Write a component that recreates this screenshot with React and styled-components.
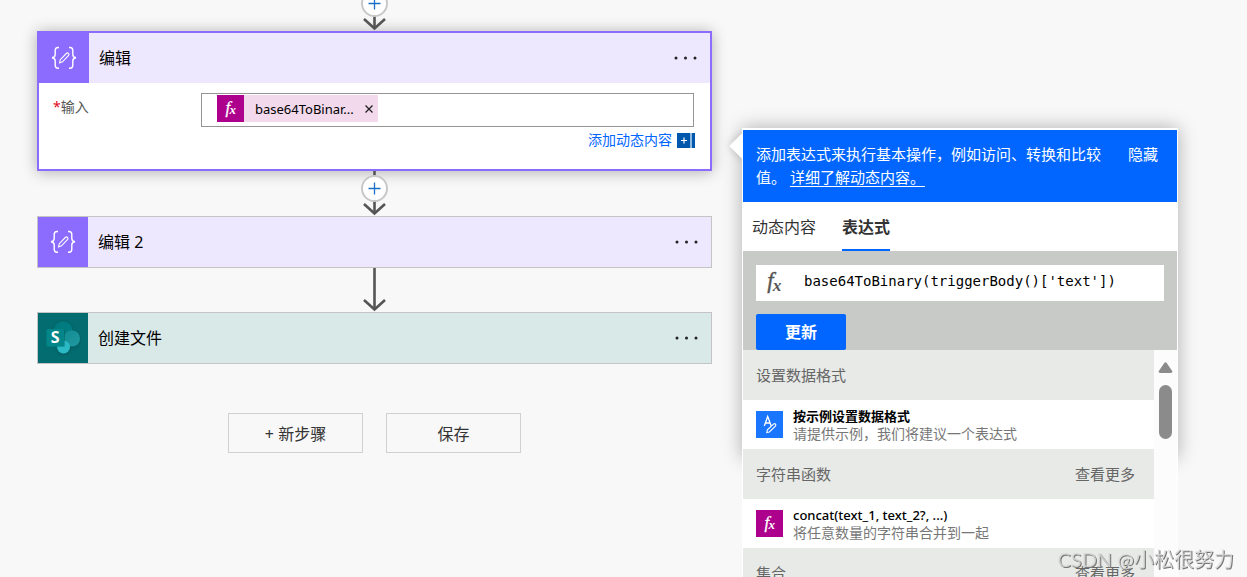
import React, { useState } from "react";
import styled, { createGlobalStyle } from "styled-components";

const GlobalStyle = createGlobalStyle`
  *, *::before, *::after {
    box-sizing: border-box;
  }

  body {
    margin: 0;
    overflow: hidden;
    background: #f8f8f8;
    color: #000;
    font-family: "Noto Sans", "Noto Sans CJK SC", sans-serif;
    font-size: 14px;
  }

  button, input {
    font-family: inherit;
  }
`;

const Page = styled.div`
  display: flex;
  align-items: flex-start;
  gap: 30px;
  height: 100vh;
  padding: 0 69px 0 37px;
  overflow: hidden;
`;

/* ---------- Flow designer ---------- */

const Flow = styled.main`
  flex: 1;
  min-width: 0;
  display: flex;
  flex-direction: column;
`;

const ConnectorBox = styled.div`
  position: relative;
  z-index: 1;
  display: flex;
  justify-content: center;

  > svg {
    display: block;
  }
`;

const AddButton = styled.button`
  position: absolute;
  left: 0;
  right: 0;
  bottom: 14px;
  display: flex;
  align-items: center;
  justify-content: center;
  width: 27px;
  height: 27px;
  margin: 0 auto;
  padding: 0;
  border: 2px solid #c8c8c8;
  border-radius: 50%;
  background: #fff;
  cursor: pointer;
`;

const Card = styled.section`
  border: ${(props) =>
    props.$selected ? "2px solid #8c6cff" : "1px solid #c4c4c4"};
  background: #fff;
  box-shadow: ${(props) =>
    props.$selected ? "0 1px 14px rgba(0, 0, 0, 0.3)" : "none"};
`;

const CardHeader = styled.header`
  display: flex;
  align-items: center;
  height: 50px;
  padding-right: 13px;
  background: ${(props) => props.$tint};
`;

const CardIcon = styled.div`
  display: flex;
  align-items: center;
  justify-content: center;
  width: 50px;
  height: 100%;
  background: ${(props) => props.$color};
`;

const CardTitle = styled.h2`
  flex: 1;
  margin: 0;
  padding: 0 0 2px 10px;
  font-size: 16px;
  font-weight: 400;
`;

const MenuButton = styled.button`
  display: flex;
  padding: 8px 0;
  border: 0;
  background: none;
  cursor: pointer;
`;

const CardBody = styled.div`
  padding: 10px 15px 19px 14px;
`;

const Field = styled.div`
  display: flex;
  align-items: flex-start;
`;

const FieldLabel = styled.label`
  width: 148px;
  padding-top: 4px;
  color: #555;
  font-size: 14px;
  line-height: 20px;

  span {
    color: #e00b1c;
  }
`;

const TokenInput = styled.div`
  flex: 1;
  min-width: 0;
  display: flex;
  align-items: flex-start;
  height: 34px;
  margin-right: 1px;
  padding: 1px 15px;
  border: 1px solid #979593;
  background: #fff;

  input {
    flex: 1;
    min-width: 0;
    height: 27px;
    border: 0;
    outline: none;
    background: none;
  }
`;

const Token = styled.span`
  display: flex;
  align-items: center;
  height: 27px;
  background: #f2d9ec;
  font-size: 13px;
`;

const TokenText = styled.span`
  padding: 0 11px;
`;

const TokenRemove = styled.button`
  display: flex;
  padding: 0 5px 0 0;
  border: 0;
  background: none;
  cursor: pointer;
`;

const FxTile = styled.span`
  display: flex;
  flex-shrink: 0;
  width: 27px;
  height: 27px;
  background: ${(props) => props.$color || "#ad008c"};
`;

const DynamicContent = styled.div`
  display: flex;
  justify-content: flex-end;
  align-items: center;
  gap: 5px;
  height: 20px;
  margin-top: 3px;
`;

const DynamicLink = styled.a`
  color: #0066ff;
  font-size: 14px;
  line-height: 20px;
  text-decoration: none;
`;

const Actions = styled.div`
  display: flex;
  justify-content: center;
  gap: 23px;
  margin-top: 49px;
`;

const ActionButton = styled.button`
  width: 135px;
  height: 40px;
  border: 1px solid #d0d0d0;
  background: #f8f8f8;
  color: #333;
  font-size: 16px;
  cursor: pointer;
`;

/* ---------- Expression callout ---------- */

const Callout = styled.aside`
  position: relative;
  width: 436px;
  height: 330px;
  margin-top: 128px;
  box-shadow: 0 0 18px rgba(0, 0, 0, 0.3);
`;

const Beak = styled.span`
  position: absolute;
  top: 9px;
  left: -9px;
  width: 18px;
  height: 18px;
  background: #fff;
  transform: rotate(45deg);
  box-shadow: 0 0 8px rgba(0, 0, 0, 0.2);
`;

const CalloutContent = styled.div`
  position: relative;
  padding: 2px 1px 0;
  background: #fff;
`;

const Banner = styled.div`
  display: flex;
  justify-content: space-between;
  align-items: flex-start;
  height: 72px;
  padding: 13px 19px 0 13px;
  background: #0066ff;
  color: #fff;
  font-size: 15px;
  line-height: 23px;

  p {
    width: 352px;
    margin: 0;
  }

  a {
    color: #fff;
    text-underline-offset: 3px;
  }

  button {
    padding: 0;
    border: 0;
    background: none;
    color: #fff;
    font-size: 15px;
    line-height: 23px;
    white-space: nowrap;
    cursor: pointer;
  }
`;

const Tabs = styled.div`
  display: flex;
  gap: 26px;
  height: 49px;
  padding-left: 9px;
`;

const Tab = styled.button`
  padding: 0;
  border: 0;
  border-bottom: 2px solid ${(props) => (props.$active ? "#0066ff" : "transparent")};
  background: none;
  color: #333;
  font-size: 16px;
  font-weight: ${(props) => (props.$active ? 700 : 400)};
  cursor: pointer;
`;

const Editor = styled.div`
  display: flex;
  flex-direction: column;
  align-items: flex-start;
  gap: 13px;
  padding: 14px 13px 0;
  background: #c8cac7;
`;

const ExpressionBox = styled.label`
  display: flex;
  align-items: center;
  align-self: stretch;
  height: 36px;
  background: #fff;

  input {
    flex: 1;
    min-width: 0;
    height: 32px;
    margin-bottom: 4px;
    padding: 0;
    border: 0;
    outline: none;
    background: none;
    color: #000;
    font-family: "DejaVu Sans Mono", "Liberation Mono", monospace;
    font-size: 14px;
  }
`;

const ExpressionIcon = styled.span`
  display: flex;
  width: 48px;
`;

const UpdateButton = styled.button`
  width: 90px;
  height: 36px;
  padding: 0 0 2px;
  border: 0;
  border-radius: 2px;
  background: #0066ff;
  color: #fff;
  font-size: 16px;
  font-weight: 700;
  cursor: pointer;
`;

const ListArea = styled.div`
  display: flex;
`;

const FunctionList = styled.div`
  flex: 1;
  min-width: 0;
`;

const GroupHeader = styled.div`
  display: flex;
  justify-content: space-between;
  align-items: center;
  height: 50px;
  padding: 0 19px 2px 13px;
  background: #e8eae7;
  color: #666;
  font-size: 15px;

  h3 {
    margin: 0;
    font-size: 15px;
    font-weight: 400;
  }

  a {
    color: #666;
    text-decoration: none;
  }
`;

const FunctionItem = styled.button`
  display: flex;
  align-items: center;
  gap: 10px;
  width: 100%;
  height: 49px;
  padding: 0 13px;
  border: 0;
  background: #fff;
  text-align: left;
  cursor: pointer;
`;

const FunctionText = styled.span`
  display: flex;
  flex-direction: column;
  line-height: 18px;

  strong {
    color: #000;
    font-size: 13px;
    font-weight: ${(props) => (props.$latin ? 500 : 700)};
  }

  span {
    color: #777;
    font-size: 14px;
  }
`;

const ScrollTrack = styled.div`
  display: flex;
  flex-direction: column;
  align-items: center;
  gap: 12px;
  width: 23px;
  padding-top: 12px;
  background: #fcfcfc;
`;

const ScrollThumb = styled.div`
  width: 13px;
  height: 54px;
  border-radius: 7px;
  background: #8b8b8b;
`;

const Watermark = styled.div`
  position: fixed;
  right: 13px;
  bottom: 4px;
  z-index: 5;
  color: rgba(215, 215, 215, 0.85);
  font-family: Lato, "Noto Sans CJK SC", sans-serif;
  font-size: 20px;
  line-height: 28px;
  text-shadow: 1px 1px 0 #777;
  pointer-events: none;
`;

/* ---------- Icons ---------- */

const BracesIcon = () => (
  <svg width="26" height="24" viewBox="0 0 26 24" fill="none" stroke="#fff" strokeWidth="1.4">
    <path d="M8 1.5H7C5 1.5 4.2 2.5 4.2 4.5V8.5C4.2 10.6 3.2 11.6 1 11.8C3.2 12 4.2 13 4.2 15V19.2C4.2 21.2 5 22.2 7 22.2H8" />
    <path d="M18 1.5H19C21 1.5 21.8 2.5 21.8 4.5V8.5C21.8 10.6 22.8 11.6 25 11.8C22.8 12 21.8 13 21.8 15V19.2C21.8 21.2 21 22.2 19 22.2H18" />
    <path
      d="M8.6 16.9L9.3 13.7L15.3 7.5C16 6.8 16.9 6.8 17.5 7.4C18.1 8 18.1 8.9 17.4 9.6L11.5 15.8L8.6 16.9Z"
      strokeWidth="1.1"
    />
  </svg>
);

const SharePointIcon = () => (
  <svg width="36" height="36" viewBox="0 0 36 36">
    <defs>
      <linearGradient id="spTop" x1="0" y1="0" x2="1" y2="1">
        <stop offset="0" stopColor="#03787c" />
        <stop offset="1" stopColor="#078186" />
      </linearGradient>
      <linearGradient id="spSide" x1="0" y1="0" x2="1" y2="1">
        <stop offset="0" stopColor="#128d93" />
        <stop offset="1" stopColor="#2298a0" />
      </linearGradient>
      <filter id="spShadow" x="-30%" y="-30%" width="160%" height="160%">
        <feDropShadow dx="0" dy="1" stdDeviation="1.5" floodColor="#003c40" floodOpacity="0.55" />
      </filter>
    </defs>
    <g filter="url(#spShadow)">
      <circle cx="18" cy="11" r="9.5" fill="url(#spTop)" />
      <circle cx="27" cy="18.5" r="8" fill="url(#spSide)" />
      <circle cx="18.5" cy="27" r="6.5" fill="#2bb9c5" />
    </g>
    <path d="M12 10H20V26.5H12Z" fill="#03595e" opacity="0.4" />
    <rect x="1.5" y="9" width="17.5" height="17.5" rx="1.5" fill="#03868a" />
    <text
      x="10.2"
      y="23.2"
      textAnchor="middle"
      fill="#fff"
      fontFamily="Open Sans, sans-serif"
      fontWeight="700"
      fontSize="16"
    >
      S
    </text>
  </svg>
);

const FxIcon = ({ size = 27, color = "#fff" }) => (
  <svg width={size} height={size} viewBox="0 0 27 27" fill={color}>
    <g fontFamily="Liberation Serif, serif" fontStyle="italic">
      <text x="8.4" y="17.6" fontSize="17" stroke={color} strokeWidth="0.3">
        f
      </text>
      <text x="12.6" y="19.4" fontSize="13" fontWeight="700">
        x
      </text>
    </g>
  </svg>
);

const FormatIcon = () => (
  <svg width="27" height="27" viewBox="0 0 27 27" fill="none" stroke="#fff">
    <path d="M8.3 15L11.7 5.5L15.2 15M9.5 12H14" strokeWidth="1.3" />
    <path
      d="M10.8 21.5L11.4 18.9L17.5 13.2C18.1 12.6 18.9 12.6 19.5 13.2C20 13.8 20 14.5 19.4 15.1L13.4 21L10.8 21.5Z"
      strokeWidth="1.1"
    />
  </svg>
);

const DotsIcon = () => (
  <svg width="23" height="4" viewBox="0 0 23 4" fill="#222">
    <circle cx="2" cy="2" r="1.5" />
    <circle cx="11.5" cy="2" r="1.5" />
    <circle cx="21" cy="2" r="1.5" />
  </svg>
);

const CloseIcon = () => (
  <svg width="8" height="8" viewBox="0 0 8 8" stroke="#222" strokeWidth="1.3">
    <path d="M0.5 0.5L7.5 7.5M7.5 0.5L0.5 7.5" />
  </svg>
);

const PlusIcon = () => (
  <svg width="13" height="13" viewBox="0 0 13 13" stroke="#1a6fc9" strokeWidth="1.3">
    <path d="M6.5 0.5V12.5M0.5 6.5H12.5" />
  </svg>
);

const AddDynamicIcon = () => (
  <svg width="18" height="15" viewBox="0 0 18 15">
    <rect width="18" height="15" fill="#0058ad" />
    <rect x="13" width="2" height="15" fill="#8db9e2" />
    <path d="M4 7.5H10M7 4.5V10.5" stroke="#fff" strokeWidth="1.2" />
  </svg>
);

const ArrowIcon = ({ height }) => (
  <svg width="23" height={height} viewBox={`0 0 23 ${height}`} fill="none" stroke="#555" strokeWidth="2.6">
    <path d={`M11.5 0V${height - 2}`} />
    <path d={`M1 ${height - 12}L11.5 ${height - 2.5}L22 ${height - 12}`} />
  </svg>
);

const ScrollUpIcon = () => (
  <svg width="15" height="11" viewBox="0 0 15 11" fill="#8b8b8b">
    <path d="M6.5 0.8Q7.5 -0.3 8.5 0.8L14.2 9Q14.8 10.8 13 11H2Q0.2 10.8 0.8 9Z" />
  </svg>
);

/* ---------- Parts ---------- */

const Connector = ({ height, addable }) => (
  <ConnectorBox>
    <ArrowIcon height={height} />
    {addable && (
      <AddButton aria-label="+">
        <PlusIcon />
      </AddButton>
    )}
  </ConnectorBox>
);

const StepHeader = ({ title, icon, color, tint }) => (
  <CardHeader $tint={tint}>
    <CardIcon $color={color}>{icon}</CardIcon>
    <CardTitle>{title}</CardTitle>
    <MenuButton aria-label="...">
      <DotsIcon />
    </MenuButton>
  </CardHeader>
);

const groups = [
  {
    name: "设置数据格式",
    items: [
      {
        title: "按示例设置数据格式",
        description: "请提供示例，我们将建议一个表达式",
        format: true,
      },
    ],
  },
  {
    name: "字符串函数",
    more: true,
    items: [
      {
        title: "concat(text_1, text_2?, ...)",
        description: "将任意数量的字符串合并到一起",
      },
    ],
  },
  { name: "集合", more: true, items: [] },
];

const App = () => {
  const [activeTab, setActiveTab] = useState("表达式");
  const [inputValue, setInputValue] = useState("");
  const [expression, setExpression] = useState(
    "base64ToBinary(triggerBody()['text'])"
  );

  return (
    <>
      <GlobalStyle />
      <Page lang="zh-CN">
        <Flow>
          <Connector addable height={31} />
          <Card $selected>
            <StepHeader title="编辑" icon={<BracesIcon />} color="#8c6cff" tint="#eee8ff" />
            <CardBody>
              <Field>
                <FieldLabel htmlFor="compose-input">
                  <span>*</span>输入
                </FieldLabel>
                <TokenInput>
                  <Token>
                    <FxTile>
                      <FxIcon />
                    </FxTile>
                    <TokenText>base64ToBinar...</TokenText>
                    <TokenRemove aria-label="×">
                      <CloseIcon />
                    </TokenRemove>
                  </Token>
                  <input
                    id="compose-input"
                    type="text"
                    value={inputValue}
                    onChange={(e) => setInputValue(e.target.value)}
                  />
                </TokenInput>
              </Field>
              <DynamicContent>
                <DynamicLink href="#dynamic">添加动态内容</DynamicLink>
                <AddDynamicIcon />
              </DynamicContent>
            </CardBody>
          </Card>
          <Connector addable height={45} />
          <Card>
            <StepHeader title="编辑 2" icon={<BracesIcon />} color="#8c6cff" tint="#eee8ff" />
          </Card>
          <Connector height={44} />
          <Card>
            <StepHeader title="创建文件" icon={<SharePointIcon />} color="#036c70" tint="#d9e9e8" />
          </Card>
          <Actions>
            <ActionButton>+ 新步骤</ActionButton>
            <ActionButton>保存</ActionButton>
          </Actions>
        </Flow>

        <Callout>
          <Beak />
          <CalloutContent>
            <Banner>
              <p>
                添加表达式来执行基本操作，例如访问、转换和比较值。{" "}
                <a href="#learn">详细了解动态内容。</a>
              </p>
              <button>隐藏</button>
            </Banner>
            <Tabs role="tablist">
              {["动态内容", "表达式"].map((tab) => (
                <Tab
                  key={tab}
                  role="tab"
                  aria-selected={activeTab === tab}
                  $active={activeTab === tab}
                  onClick={() => setActiveTab(tab)}
                >
                  {tab}
                </Tab>
              ))}
            </Tabs>
            <Editor>
              <ExpressionBox>
                <ExpressionIcon>
                  <FxIcon size={36} color="#555" />
                </ExpressionIcon>
                <input
                  type="text"
                  aria-label="表达式"
                  spellCheck={false}
                  value={expression}
                  onChange={(e) => setExpression(e.target.value)}
                />
              </ExpressionBox>
              <UpdateButton>更新</UpdateButton>
            </Editor>
            <ListArea>
              <FunctionList>
                {groups.map((group) => (
                  <React.Fragment key={group.name}>
                    <GroupHeader>
                      <h3>{group.name}</h3>
                      {group.more && <a href="#more">查看更多</a>}
                    </GroupHeader>
                    {group.items.map((item) => (
                      <FunctionItem key={item.title}>
                        <FxTile $color={item.format ? "#1a75ff" : "#ad008c"}>
                          {item.format ? <FormatIcon /> : <FxIcon />}
                        </FxTile>
                        <FunctionText $latin={!item.format}>
                          <strong>{item.title}</strong>
                          <span>{item.description}</span>
                        </FunctionText>
                      </FunctionItem>
                    ))}
                  </React.Fragment>
                ))}
              </FunctionList>
              <ScrollTrack>
                <ScrollUpIcon />
                <ScrollThumb />
              </ScrollTrack>
            </ListArea>
          </CalloutContent>
        </Callout>
      </Page>
      <Watermark>CSDN @小松很努力</Watermark>
    </>
  );
};

export default App;
